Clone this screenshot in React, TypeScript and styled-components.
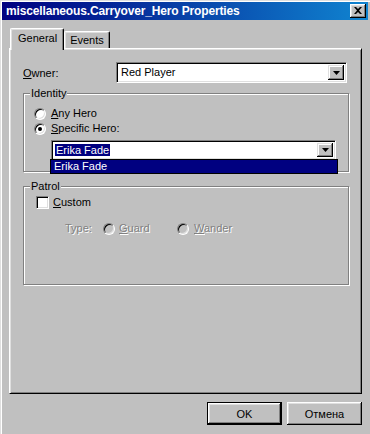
import React from 'react';
import styled, { createGlobalStyle } from 'styled-components';

const face = '#c0c0c0';
const shadow = '#808080';
const light = '#dfdfdf';
const navy = '#000080';

const GlobalStyle = createGlobalStyle`
  html, body {
    margin: 0;
    padding: 0;
    background: ${face};
  }
  * {
    box-sizing: border-box;
  }
`;

const Window = styled.div`
  width: 370px;
  height: 434px;
  background: ${face};
  border-left: 1px solid ${light};
  border-top: 1px solid ${light};
  box-shadow: inset 1px 1px #fff;
  padding: 1px 2px 0 1px;
  display: flex;
  flex-direction: column;
  font-family: 'Liberation Sans', Arial, sans-serif;
  font-size: 11px;
  color: #000;
  overflow: hidden;
`;

const TitleBar = styled.div`
  height: 19px;
  display: flex;
  align-items: center;
  justify-content: space-between;
  padding: 0 2px 0 4px;
  background: linear-gradient(to right, ${navy}, #1084d0);
  color: #fff;
`;

const TitleText = styled.span`
  font-weight: bold;
  font-size: 12px;
  letter-spacing: -0.15px;
  white-space: nowrap;
`;

const CloseButton = styled.div`
  width: 16px;
  height: 14px;
  background: ${face};
  box-shadow: inset -1px -1px #000, inset 1px 1px #fff, inset -2px -2px ${shadow}, inset 2px 2px ${light};
  display: flex;
  align-items: center;
  justify-content: center;
  padding: 0 1px 1px 0;
`;

const Body = styled.div`
  flex: 1;
  display: flex;
  flex-direction: column;
  padding: 7px 6px 9px 7px;
`;

const TabRow = styled.div`
  display: flex;
  align-items: flex-end;
  padding-left: 1px;
  height: 21px;
`;

const Tab = styled.div<{ $active?: boolean }>`
  position: relative;
  z-index: ${(p) => (p.$active ? 1 : 0)};
  height: ${(p) => (p.$active ? 22 : 17)}px;
  margin-bottom: ${(p) => (p.$active ? -2 : 0)}px;
  padding: ${(p) => (p.$active ? '3px 6px 0 7px' : '2px 5px 0 5px')};
  background: ${face};
  border-top: 1px solid #fff;
  border-left: 1px solid #fff;
  border-right: 1px solid #000;
  border-radius: 2px 2px 0 0;
  box-shadow: inset -1px 0 ${shadow}, inset 1px 1px ${light};
  white-space: nowrap;
  line-height: 13px;
`;

const Panel = styled.div`
  height: 346px;
  border-top: 1px solid #fff;
  border-left: 1px solid #fff;
  border-right: 1px solid #000;
  border-bottom: 1px solid #000;
  box-shadow: inset 1px 1px ${light}, inset -1px -1px ${shadow};
  padding: 13px 12px 0 13px;
  display: flex;
  flex-direction: column;
`;

const OwnerRow = styled.div`
  display: flex;
  align-items: center;
  padding-right: 2px;
`;

const FieldLabel = styled.span`
  width: 93px;
`;

const Combo = styled.div<{ $height: number }>`
  position: relative;
  flex: 1;
  height: ${(p) => p.$height}px;
  background: #fff;
  border-top: 1px solid ${shadow};
  border-left: 1px solid ${shadow};
  border-right: 1px solid #fff;
  border-bottom: 1px solid #fff;
  box-shadow: inset 1px 1px #000, inset -1px -1px ${light};
  display: flex;
  align-items: center;
  padding: 2px 2px 2px 3px;
`;

const ComboText = styled.span<{ $selected?: boolean }>`
  flex: 1;
  line-height: 13px;
  span {
    padding: 0 1px;
    background: ${(p) => (p.$selected ? navy : 'transparent')};
    color: ${(p) => (p.$selected ? '#fff' : '#000')};
  }
`;

const DropButton = styled.div`
  width: 16px;
  align-self: stretch;
  background: ${face};
  box-shadow: inset -1px -1px #000, inset 1px 1px ${light}, inset -2px -2px ${shadow}, inset 2px 2px #fff;
  display: flex;
  align-items: center;
  justify-content: center;
`;

const DropList = styled.div`
  position: absolute;
  top: 100%;
  left: -2px;
  right: -3px;
  height: 15px;
  border: 1px solid #000;
  background: ${navy};
  color: #fff;
  padding-left: 3px;
  line-height: 13px;
`;

const Group = styled.div<{ $height: number; $gap: number }>`
  margin-top: ${(p) => p.$gap}px;
  height: ${(p) => p.$height}px;
  border: 1px solid ${shadow};
  box-shadow: inset 1px 1px #fff, 1px 1px #fff;
  display: flex;
  flex-direction: column;
`;

const GroupTitle = styled.span`
  align-self: flex-start;
  margin: -7px 0 0 6px;
  padding: 0 1px;
  background: ${face};
  line-height: 13px;
`;

const OptionRow = styled.div<{ $indent: number; $gap: number }>`
  display: flex;
  align-items: center;
  height: 15px;
  margin-top: ${(p) => p.$gap}px;
  padding-left: ${(p) => p.$indent}px;
`;

const Radio = styled.span<{ $checked?: boolean; $disabled?: boolean }>`
  width: 12px;
  height: 12px;
  border-radius: 50%;
  border: 1px solid;
  border-color: ${shadow} #fff #fff ${shadow};
  background: ${(p) => (p.$disabled ? face : '#fff')};
  box-shadow: inset 1px 1px #000, inset -1px -1px ${light};
  display: flex;
  align-items: center;
  justify-content: center;
  flex-shrink: 0;
  &::after {
    content: '';
    width: 4px;
    height: 4px;
    border-radius: 50%;
    background: ${(p) => (p.$checked ? '#000' : 'transparent')};
  }
`;

const Check = styled.span`
  width: 13px;
  height: 13px;
  border-top: 1px solid ${shadow};
  border-left: 1px solid ${shadow};
  border-right: 1px solid #fff;
  border-bottom: 1px solid #fff;
  box-shadow: inset 1px 1px #000, inset -1px -1px ${light};
  background: #fff;
  flex-shrink: 0;
`;

const OptionText = styled.span<{ $disabled?: boolean; $gap?: number }>`
  margin-left: ${(p) => p.$gap ?? 5}px;
  line-height: 13px;
  color: ${(p) => (p.$disabled ? shadow : '#000')};
  text-shadow: ${(p) => (p.$disabled ? '1px 1px #fff' : 'none')};
`;

const TypeLabel = styled(OptionText)`
  width: 38px;
  margin-left: 0;
`;

const TypeOption = styled.span<{ $width?: number }>`
  display: flex;
  align-items: center;
  width: ${(p) => (p.$width ? `${p.$width}px` : 'auto')};
`;

const ComboWrap = styled.div`
  display: flex;
  margin: 4px 12px 0 27px;
`;

const ButtonRow = styled.div`
  display: flex;
  justify-content: flex-end;
  gap: 5px;
  margin-top: 8px;
`;

const Button = styled.div<{ $default?: boolean }>`
  width: 75px;
  height: 23px;
  background: ${face};
  display: flex;
  align-items: center;
  justify-content: center;
  border: ${(p) => (p.$default ? '1px solid #000' : 'none')};
  box-shadow: inset -1px -1px #000, inset 1px 1px #fff, inset -2px -2px ${shadow}, inset 2px 2px ${light};
`;

const Arrow = () => (
  <svg width="7" height="4" viewBox="0 0 7 4">
    <path d="M0 0h7L3.5 4z" fill="#000" />
  </svg>
);

const CloseIcon = () => (
  <svg width="8" height="7" viewBox="0 0 8 7">
    <path d="M0 0h2l2 2 2-2h2L5 3.5 8 7H6L4 5 2 7H0l3-3.5z" fill="#000" />
  </svg>
);

export default function App() {
  return (
    <>
      <GlobalStyle />
      <Window>
        <TitleBar>
          <TitleText>miscellaneous.Carryover_Hero Properties</TitleText>
          <CloseButton>
            <CloseIcon />
          </CloseButton>
        </TitleBar>
        <Body>
          <TabRow>
            <Tab $active>General</Tab>
            <Tab>Events</Tab>
          </TabRow>
          <Panel>
            <OwnerRow>
              <FieldLabel>
                <u>O</u>wner:
              </FieldLabel>
              <Combo $height={21}>
                <ComboText>
                  <span>Red Player</span>
                </ComboText>
                <DropButton>
                  <Arrow />
                </DropButton>
              </Combo>
            </OwnerRow>

            <Group $height={79} $gap={10}>
              <GroupTitle>Identity</GroupTitle>
              <OptionRow $indent={10} $gap={6}>
                <Radio />
                <OptionText>
                  <u>A</u>ny Hero
                </OptionText>
              </OptionRow>
              <OptionRow $indent={10} $gap={0}>
                <Radio $checked />
                <OptionText>
                  <u>S</u>pecific Hero:
                </OptionText>
              </OptionRow>
              <ComboWrap>
                <Combo $height={20}>
                  <ComboText $selected>
                    <span>Erika Fade</span>
                  </ComboText>
                  <DropButton>
                    <Arrow />
                  </DropButton>
                  <DropList>Erika Fade</DropList>
                </Combo>
              </ComboWrap>
            </Group>

            <Group $height={99} $gap={14}>
              <GroupTitle>Patrol</GroupTitle>
              <OptionRow $indent={12} $gap={2}>
                <Check />
                <OptionText $gap={4}>
                  <u>C</u>ustom
                </OptionText>
              </OptionRow>
              <OptionRow $indent={41} $gap={11}>
                <TypeLabel $disabled>Type:</TypeLabel>
                <TypeOption $width={74}>
                  <Radio $disabled />
                  <OptionText $disabled $gap={4}>
                    <u>G</u>uard
                  </OptionText>
                </TypeOption>
                <TypeOption>
                  <Radio $disabled />
                  <OptionText $disabled>
                    <u>W</u>ander
                  </OptionText>
                </TypeOption>
              </OptionRow>
            </Group>
          </Panel>
          <ButtonRow>
            <Button $default>OK</Button>
            <Button>Отмена</Button>
          </ButtonRow>
        </Body>
      </Window>
    </>
  );
}
